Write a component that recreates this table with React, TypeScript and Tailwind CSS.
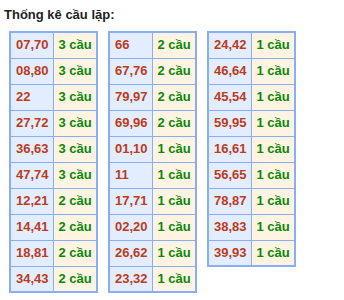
import React from "react";

const t1: [string, string][] = [
  ["07,70", "3 cầu"],
  ["08,80", "3 cầu"],
  ["22", "3 cầu"],
  ["27,72", "3 cầu"],
  ["36,63", "3 cầu"],
  ["47,74", "3 cầu"],
  ["12,21", "2 cầu"],
  ["14,41", "2 cầu"],
  ["18,81", "2 cầu"],
  ["34,43", "2 cầu"],
];
const t2: [string, string][] = [
  ["66", "2 cầu"],
  ["67,76", "2 cầu"],
  ["79,97", "2 cầu"],
  ["69,96", "2 cầu"],
  ["01,10", "1 cầu"],
  ["11", "1 cầu"],
  ["17,71", "1 cầu"],
  ["02,20", "1 cầu"],
  ["26,62", "1 cầu"],
  ["23,32", "1 cầu"],
];
const t3: [string, string][] = [
  ["24,42", "1 cầu"],
  ["46,64", "1 cầu"],
  ["45,54", "1 cầu"],
  ["59,95", "1 cầu"],
  ["16,61", "1 cầu"],
  ["56,65", "1 cầu"],
  ["78,87", "1 cầu"],
  ["38,83", "1 cầu"],
  ["39,93", "1 cầu"],
];

function T({ rows }: { rows: [string, string][] }) {
  return (
    <table className="table-fixed w-[87px] border-collapse border-2 border-[#8aaef5]">
      <colgroup>
        <col className="w-[43px]" />
        <col className="w-[44px]" />
      </colgroup>
      <tbody>
        {rows.map(([a, b], i) => (
          <tr key={i} className="h-[26px]">
            <td className="border border-[#8aaef5] bg-[#e2eeff] pl-[5px] pr-0 py-0 text-[#bd3b1b] font-bold text-[13px] leading-[16px] align-middle whitespace-nowrap overflow-hidden">
              {a}
            </td>
            <td className="border border-[#8aaef5] bg-[#fff4e1] pl-[5px] pr-0 py-0 text-[#0b870b] font-bold text-[13px] leading-[16px] align-middle whitespace-nowrap overflow-hidden">
              {b}
            </td>
          </tr>
        ))}
      </tbody>
    </table>
  );
}

export default function App() {
  return (
    <div
      className="w-[344px] h-[300px] bg-white overflow-hidden"
      style={{ fontFamily: '"Liberation Sans", Arial, sans-serif' }}
    >
      <div className="pl-[4px] pt-[7px] text-[13px] leading-[16px] font-bold text-[#222]">
        Thống kê cầu lặp:
      </div>
      <div className="flex items-start gap-[10px] pl-[9px] mt-[8px]">
        <T rows={t1} />
        <T rows={t2} />
        <T rows={t3} />
      </div>
    </div>
  );
}
